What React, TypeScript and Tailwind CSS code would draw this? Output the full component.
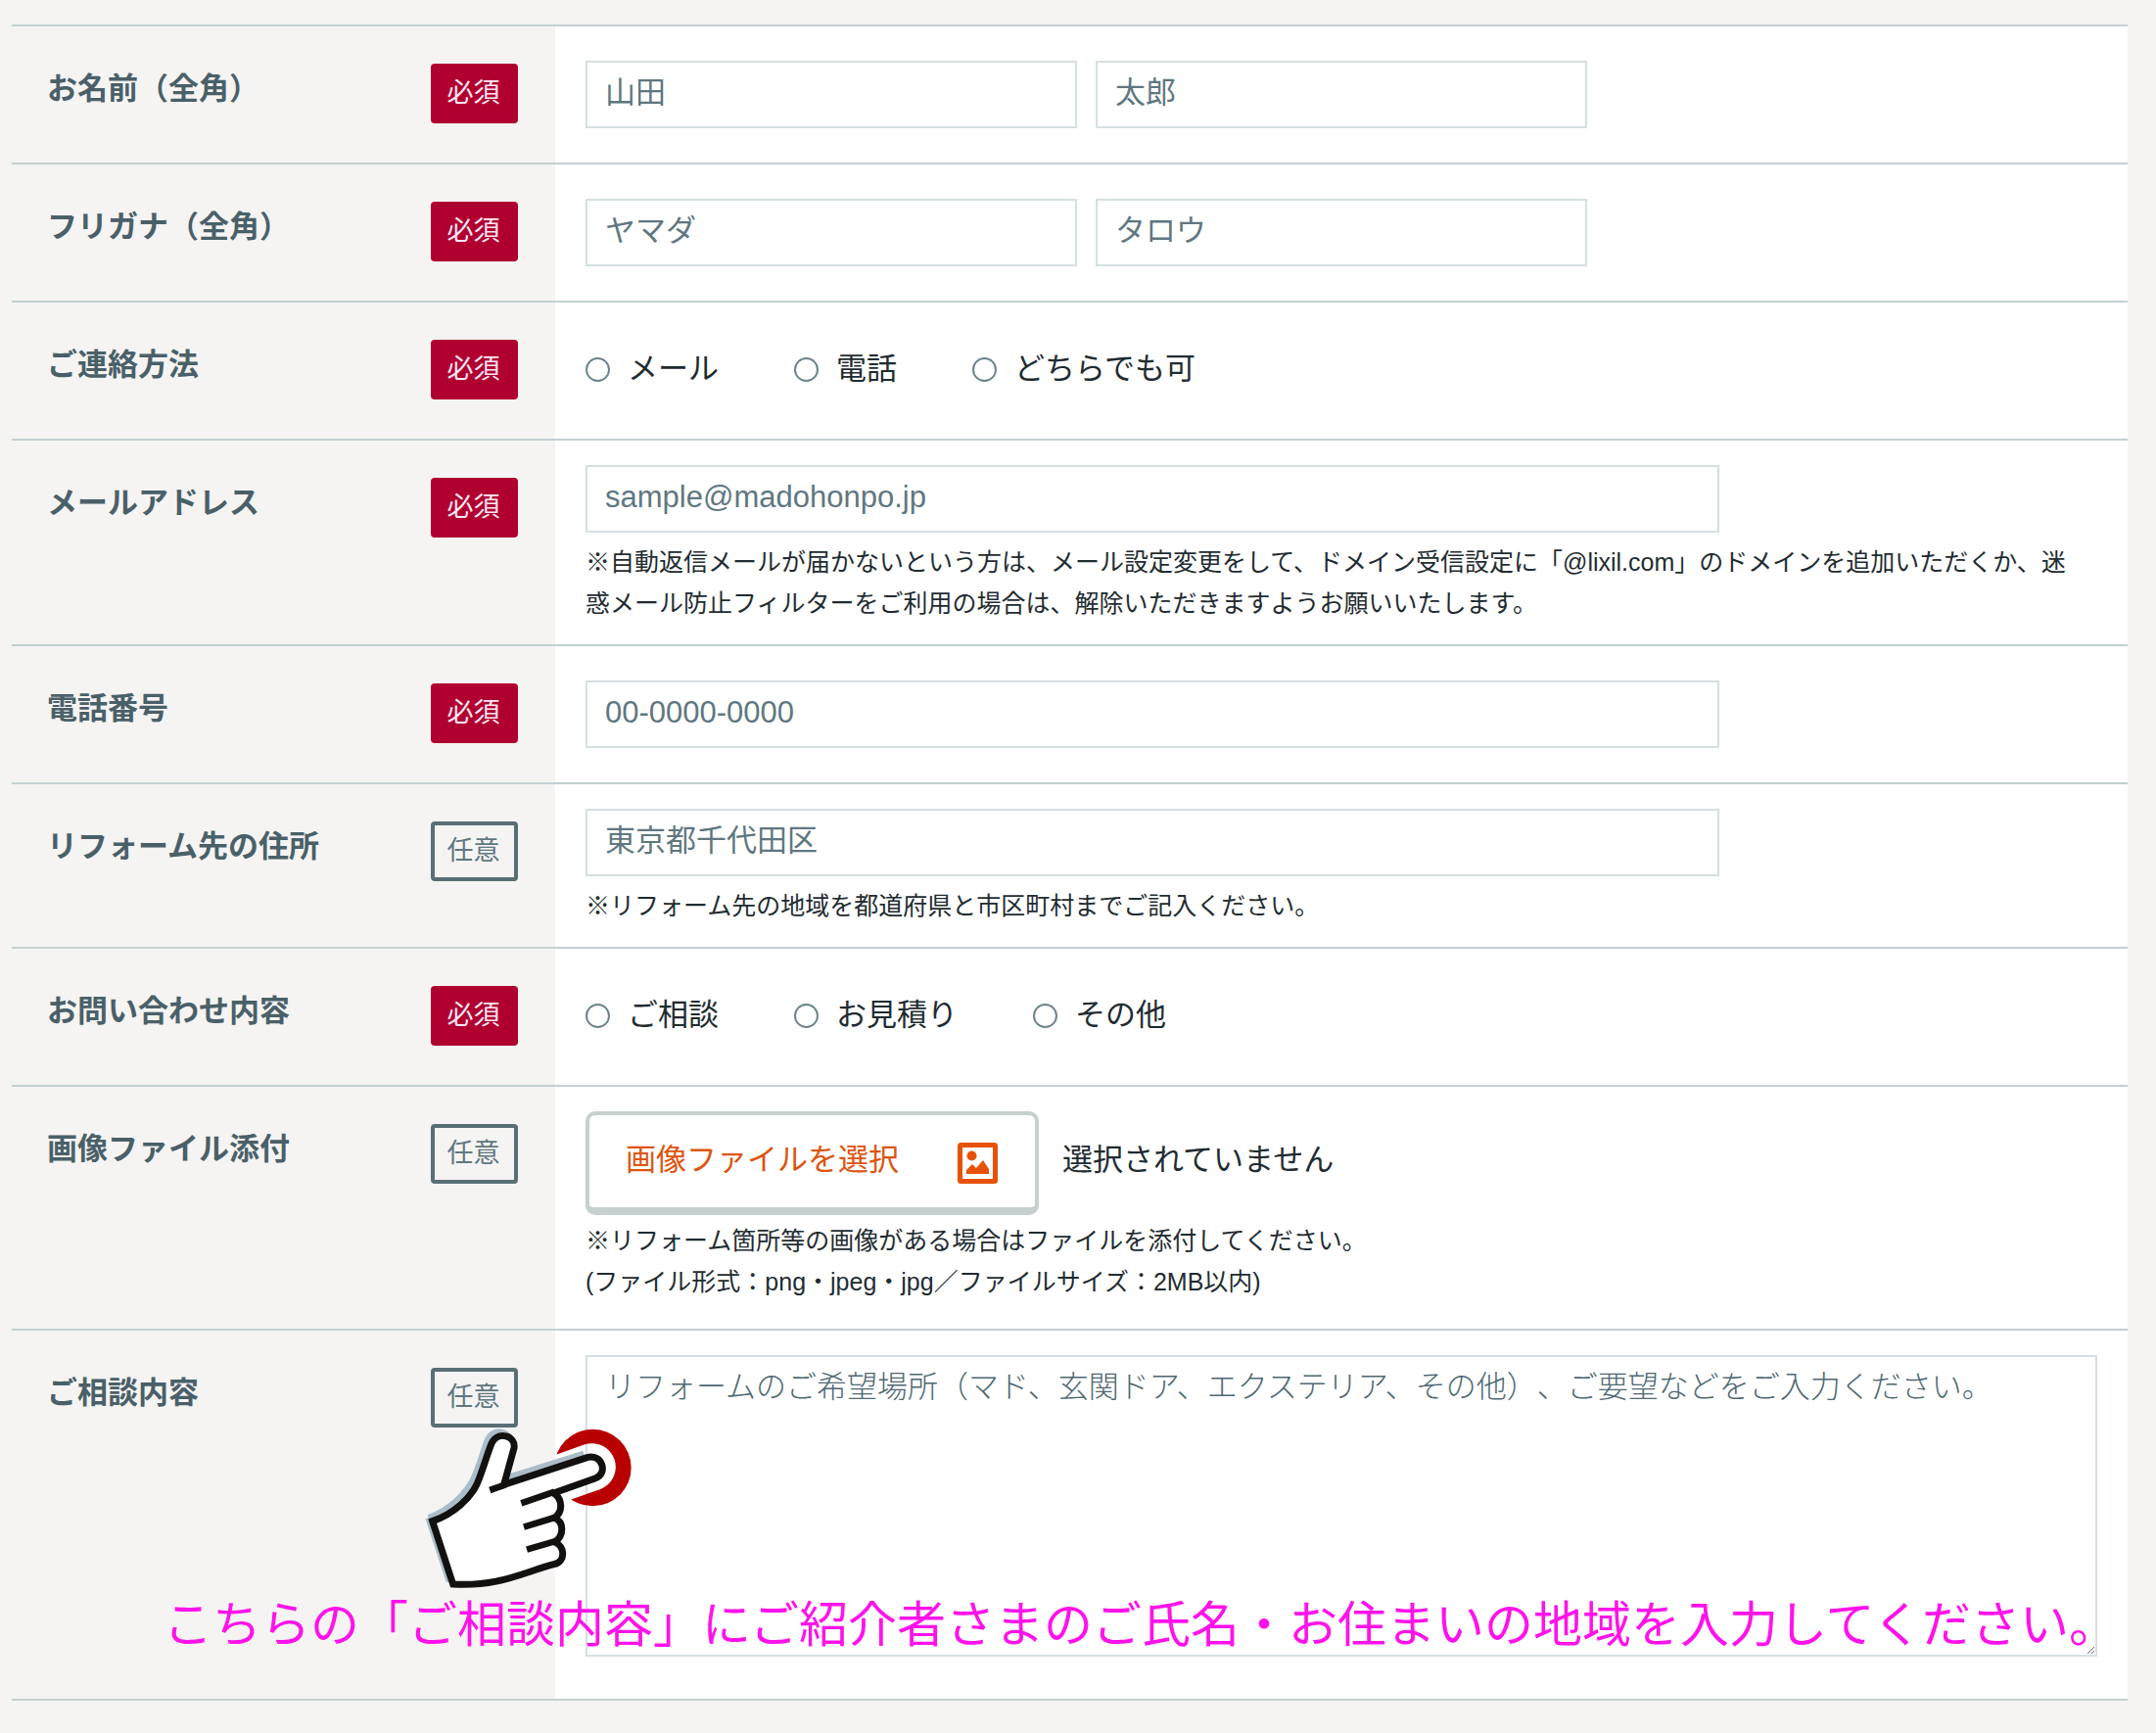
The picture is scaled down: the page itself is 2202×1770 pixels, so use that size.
import { useRef, useState } from 'react';
import type { ReactNode } from 'react';

const inputStyle =
  'h-[69px] max-w-full border-2 border-[#d5e0e2] bg-white px-[18px] pb-[3px] text-[31px] text-[#1f2c31] placeholder:text-[#5f7780] placeholder:opacity-100 focus:outline-none focus:border-[#8fa6ad]';

const Badge = ({ required }: { required: boolean }) =>
  required ? (
    <span className="mt-[38px] flex h-[61px] w-[89px] shrink-0 items-center justify-center rounded-[4px] bg-[#b00030] pr-0.5 text-[27px] leading-none text-[#ffe6f6]">
      必須
    </span>
  ) : (
    <span className="mt-[38px] flex h-[61px] w-[89px] shrink-0 items-center justify-center rounded-[4px] border-4 border-[#5a6e76] pr-0.5 text-[27px] leading-none text-[#5f7780]">
      任意
    </span>
  );

type RowProps = {
  title: string;
  required?: boolean;
  htmlFor?: string;
  titleId?: string;
  className?: string;
  children: ReactNode;
};

const Row = ({ title, required = false, htmlFor, titleId, className = '', children }: RowProps) => (
  <div className="flex border-b-2 border-[#c3d0d2]">
    <div className="flex w-[555px] shrink-0 items-start justify-between pr-[38px] pl-9">
      {htmlFor ? (
        <label htmlFor={htmlFor} className="mt-[41px] text-[31px] leading-[46px] font-bold text-[#4a6068]">
          {title}
        </label>
      ) : (
        <span id={titleId} className="mt-[41px] text-[31px] leading-[46px] font-bold text-[#4a6068]">
          {title}
        </span>
      )}
      <Badge required={required} />
    </div>
    <div className={`relative min-w-0 flex-1 bg-white pr-[31px] pl-[31px] ${className}`}>{children}</div>
  </div>
);

const RadioGroup = ({ name, labelledBy, options }: { name: string; labelledBy: string; options: string[] }) => (
  <div role="radiogroup" aria-labelledby={labelledBy} className="flex h-[69px] flex-wrap items-center gap-x-[77px] pb-[3px]">
    {options.map((option) => (
      <label key={option} className="flex cursor-pointer items-center gap-[18px] text-[31px] leading-[46px]">
        <input
          type="radio"
          name={name}
          value={option}
          className="size-[25px] appearance-none rounded-full border-2 border-[#6d848c] bg-white checked:border-8"
        />
        {option}
      </label>
    ))}
  </div>
);

const Note = ({ children, className = 'mt-[9px]' }: { children: ReactNode; className?: string }) => (
  <p className={`text-[25px] leading-[42px] ${className}`}>{children}</p>
);

const ImageIcon = () => (
  <svg width="41" height="42" viewBox="0 0 41 42" className="mt-1" aria-hidden="true">
    <rect x="2.5" y="2.5" width="36" height="37" rx="1" fill="#fff" stroke="#e85208" strokeWidth="5" />
    <circle cx="14.5" cy="13.5" r="5" fill="#e85208" />
    <path d="M9 32v-4l6-6 4 4 7-8 6 9v5z" fill="#e85208" />
  </svg>
);

const PointingHand = () => (
  <svg
    viewBox="100 290 639 501"
    className="pointer-events-none absolute top-[98px] -left-[134px] h-[167px] w-[213px]"
    aria-hidden="true"
  >
    <mask id="ring">
      <rect x="100" y="290" width="639" height="501" fill="#fff" />
      <path d="M300 525L615 414" stroke="#000" strokeWidth="145" strokeLinecap="round" />
    </mask>
    <circle cx="617" cy="416" r="118" fill="#b90000" mask="url(#ring)" />
    <path
      d="M114 570C185 545 232 490 250 455C270 415 280 370 296 330C312 295 362 300 366 342L346 450L590 374"
      fill="none"
      stroke="#aabdc8"
      strokeWidth="20"
      strokeLinejoin="round"
    />
    <path d="M114 570L178 765" stroke="#aabdc8" strokeWidth="20" />
    <path
      d="M126 580C195 556 243 507 262 467C282 420 292 378 308 340C328 302 382 318 376 356L345 468L602 384C646 374 666 434 624 449L497 494C524 510 528 552 499 570C530 582 530 625 500 644C532 655 536 704 498 712C400 738 330 781 189 773Z"
      fill="#fff"
      stroke="#12110f"
      strokeWidth="21"
      strokeLinejoin="miter"
    />
    <path d="M302 485L350 468M398 525L500 490M406 598L500 569M415 667L500 642" stroke="#12110f" strokeWidth="20" />
  </svg>
);

const App = () => {
  const fileRef = useRef<HTMLInputElement>(null);
  const [fileName, setFileName] = useState('');

  return (
    <div className="min-h-screen bg-[#f5f4f3] pt-[25px] pr-[29px] pb-[33px] pl-3 font-['Liberation_Sans','Noto_Sans_CJK_JP',sans-serif] text-[#1f2c31] [text-spacing-trim:space-all]">
      <form lang="ja" className="border-t-2 border-[#c3d0d2]" onSubmit={(e) => e.preventDefault()}>
        <Row title="お名前（全角）" required htmlFor="sei" className="py-[35px]">
          <div className="flex gap-[19px]">
            <input id="sei" type="text" placeholder="山田" className={`w-[502px] ${inputStyle}`} />
            <input type="text" aria-label="名" placeholder="太郎" className={`w-[502px] ${inputStyle}`} />
          </div>
        </Row>

        <Row title="フリガナ（全角）" required htmlFor="seiKana" className="py-[35px]">
          <div className="flex gap-[19px]">
            <input id="seiKana" type="text" placeholder="ヤマダ" className={`w-[502px] ${inputStyle}`} />
            <input type="text" aria-label="メイ" placeholder="タロウ" className={`w-[502px] ${inputStyle}`} />
          </div>
        </Row>

        <Row title="ご連絡方法" required titleId="contact" className="py-[35px]">
          <RadioGroup name="contact" labelledBy="contact" options={['メール', '電話', 'どちらでも可']} />
        </Row>

        <Row title="メールアドレス" required htmlFor="email" className="pt-[25px] pb-[21px]">
          <input id="email" type="email" placeholder="sample@madohonpo.jp" className={`block w-[1158px] ${inputStyle}`} />
          <Note>
            ※自動返信メールが届かないという方は、メール設定変更をして、ドメイン受信設定に「@lixil.com」のドメインを追加いただくか、迷
            <br />
            惑メール防止フィルターをご利用の場合は、解除いただきますようお願いいたします。
          </Note>
        </Row>

        <Row title="電話番号" required htmlFor="tel" className="py-[35px]">
          <input id="tel" type="tel" placeholder="00-0000-0000" className={`block w-[1158px] ${inputStyle}`} />
        </Row>

        <Row title="リフォーム先の住所" htmlFor="address" className="pt-[25px] pb-[21px]">
          <input id="address" type="text" placeholder="東京都千代田区" className={`block w-[1158px] ${inputStyle}`} />
          <Note>※リフォーム先の地域を都道府県と市区町村までご記入ください。</Note>
        </Row>

        <Row title="お問い合わせ内容" required titleId="inquiry" className="py-[35px]">
          <RadioGroup name="inquiry" labelledBy="inquiry" options={['ご相談', 'お見積り', 'その他']} />
        </Row>

        <Row title="画像ファイル添付" htmlFor="image" className="pt-[25px] pb-[27px]">
          <div className="flex items-center gap-6">
            <button
              type="button"
              onClick={() => fileRef.current?.click()}
              className="flex h-[106px] w-[463px] cursor-pointer items-center justify-between rounded-[10px] border-4 border-b-8 border-[#c5d0cf] bg-white pr-[38px] pl-[37px] text-[31px] text-[#dd5510]"
            >
              <span className="pb-0.5">画像ファイルを選択</span>
              <ImageIcon />
            </button>
            <input
              id="image"
              ref={fileRef}
              type="file"
              accept=".png,.jpg,.jpeg"
              className="sr-only"
              onChange={(e) => setFileName(e.target.files?.[0]?.name ?? '')}
            />
            <span className="pb-1.5 text-[31px] leading-[46px]">{fileName || '選択されていません'}</span>
          </div>
          <Note className="mt-[5px]">
            ※リフォーム箇所等の画像がある場合はファイルを添付してください。
            <br />
            (ファイル形式：png・jpeg・jpg／ファイルサイズ：2MB以内)
          </Note>
        </Row>

        <Row title="ご相談内容" htmlFor="message" className="pt-[25px] pb-[43px]">
          <textarea
            id="message"
            placeholder="リフォームのご希望場所（マド、玄関ドア、エクステリア、その他）、ご要望などをご入力ください。"
            className="block h-[308px] w-full border-2 border-[#d5e0e2] bg-white px-[18px] py-2 text-[31px] leading-[46px] font-light [text-spacing-trim:space-all] placeholder:text-[#4f6872] placeholder:opacity-100 focus:outline-none"
          />
          <PointingHand />
          <p className="pointer-events-none absolute top-[276px] -left-[400px] text-[50px] leading-[50px] whitespace-nowrap text-[#ff12ea]">
            こちらの「ご相談内容」にご紹介者さまのご氏名・お住まいの地域を入力してください。
          </p>
        </Row>
      </form>
    </div>
  );
};

export default App;
